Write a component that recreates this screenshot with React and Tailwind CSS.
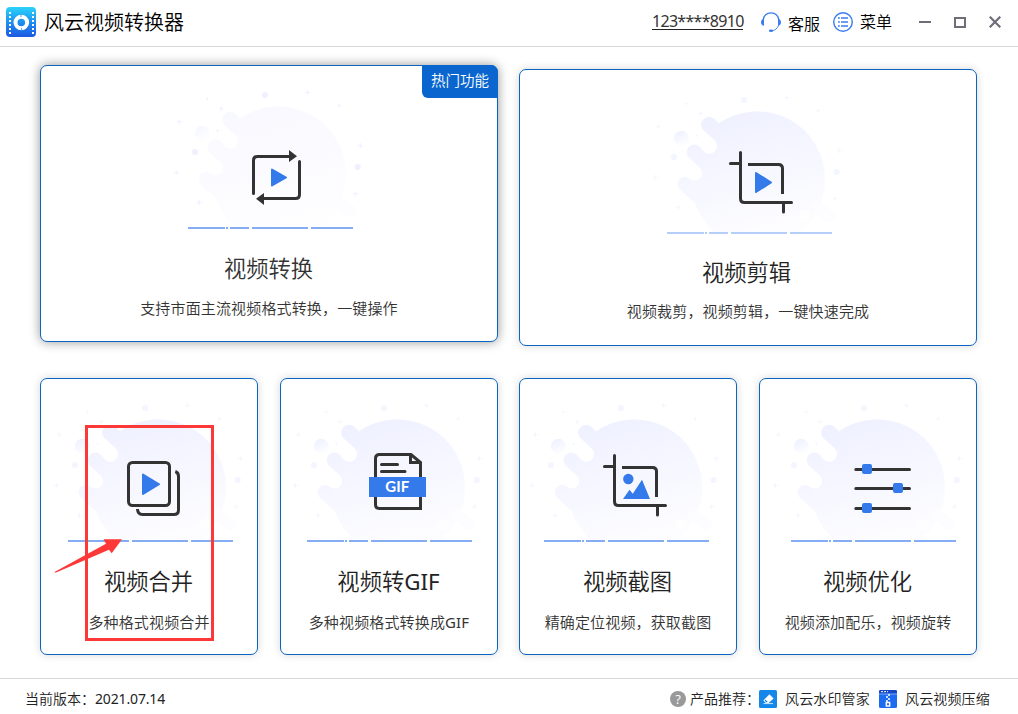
import { useId } from 'react';

const SPARKS = [
  [47.3, 18.7, 1.5],
  [61.3, 28.7, 2.5],
  [19.3, 41.7, 2.5],
  [147.7, 12.5, 2.5],
  [179.3, 25.7, 1.8],
  [200.3, 65.5, 2.5],
  [195.7, 113.7, 2.5],
  [16.3, 92.5, 2.5],
  [39.3, 122.5, 2.5],
  [57.7, 50.7, 1.5],
];

const Play = ({ x, y, w, h }) => (
  <path
    d={`M${x + 1} ${y + 1.5} L${x + w - 1.5} ${y + h / 2} L${x + 1} ${y + h - 1.5} Z`}
    fill="#357aeb"
    stroke="#357aeb"
    strokeWidth="2"
    strokeLinejoin="round"
  />
);

const Stroke = ({ d, cap = 'round' }) => (
  <path d={d} fill="none" stroke="#333333" strokeWidth="3" strokeLinecap={cap} />
);

const ConvertIcon = () => (
  <>
    <Stroke d="M93.5 113.5 V80.5 Q93.5 76.5 97.5 76.5 H130" />
    <Stroke d="M139.5 81.5 V114.5 Q139.5 118.5 135.5 118.5 H103" />
    <path d="M129 70 L137 76.2 L129 82 Z M104 113 L96 118.8 L104 125 Z" fill="#333333" />
    <Play x={111} y={88} w={16.5} h={19} />
  </>
);

const CropFrame = () => (
  <>
    <Stroke d="M101.5 67.5 V113.5 Q101.5 117.5 105.5 117.5 H152.5" />
    <Stroke d="M91.5 78.5 H101" />
    <Stroke d="M109 79.5 H139.5 Q143.5 79.5 143.5 83.5 V109" cap="butt" />
    <Stroke d="M144.5 118 V127" />
  </>
);

const TrimIcon = () => (
  <>
    <CropFrame />
    <Play x={116} y={86.5} w={17.5} h={22} />
  </>
);

const MergeIcon = () => (
  <>
    <rect x="88.5" y="69.5" width="41" height="43" rx="4" fill="none" stroke="#333333" strokeWidth="3" />
    <Stroke d="M135.3 78.5 Q138.5 79.5 138.5 83.5 V117 Q138.5 121.5 134 121.5 H102.5 Q97.7 121.5 97.5 116" cap="butt" />
    <Play x={102} y={80} w={18.5} h={22.5} />
  </>
);

const GifIcon = () => (
  <>
    <Stroke d="M96.5 84 V65.5 Q96.5 61.5 100.5 61.5 H132 L141.5 69.5 V84" cap="butt" />
    <Stroke d="M131.5 61.5 V69.5 H141.5" cap="butt" />
    <Stroke d="M96.5 104 V111.5 Q96.5 115.5 100.5 115.5 H141.5 V104" cap="butt" />
    <Stroke d="M102.5 71.5 H118.5 M102.5 78.5 H126" />
    <rect x="90" y="84" width="57" height="20" fill="#357aeb" />
    <text
      x="118.3"
      y="99"
      textAnchor="middle"
      textLength="24"
      className="fill-white font-['Lato',sans-serif] text-[15px] font-bold"
    >
      GIF
    </text>
  </>
);

const SnapshotIcon = () => (
  <>
    <g transform="translate(-3 -5)">
      <CropFrame />
    </g>
    <circle cx="112.3" cy="86" r="5.2" fill="#357aeb" />
    <path d="M107 106 L113.5 96.8 L116.8 100.7 L126 86.8 L134 106 Z" fill="#357aeb" />
  </>
);

const OptimizeIcon = () => (
  <>
    <Stroke d="M96.8 76.5 H150.5 M96.8 95.5 H150.5 M96.8 115.5 H150.5" />
    <rect x="103" y="71" width="10" height="10" rx="2" fill="#357aeb" />
    <rect x="134" y="90" width="10" height="10" rx="2" fill="#357aeb" />
    <rect x="103" y="110" width="10" height="10" rx="2" fill="#357aeb" />
  </>
);

const Illustration = ({ icon: Icon, className, faint, dot = '#f3f6ff', line = '#84adf5', lineShift = 0 }) => {
  const id = useId();

  return (
    <svg width="220" height="160" viewBox="0 0 220 160" className={`block shrink-0 ${className}`}>
      <defs>
        <linearGradient id={`${id}-blob`} x1="0.25" y1="0" x2="0.6" y2="1">
          <stop offset="0" stopColor={faint ? '#f8f8ff' : '#eef0ff'} />
          <stop offset="1" stopColor={faint ? '#fefeff' : '#fdfdff'} />
        </linearGradient>
        <linearGradient id={`${id}-ball`} x1="0.2" y1="0" x2="0.6" y2="1">
          <stop offset="0" stopColor={faint ? '#f6f7ff' : '#eef0ff'} />
          <stop offset="1" stopColor="#fefeff" />
        </linearGradient>
      </defs>
      {/* splash */}
      <path
        d="M80 38.3 L74.9 33.4 A8 8 0 0 0 63.7 44.6 L75.8 55.6 A7.7 7.7 0 0 1 64.9 66.5 L60.8 61.8 A7.7 7.7 0 0 0 49.9 72.7 L60.7 82.4 A7.5 7.5 0 0 1 50.5 93.6 A7.3 7.3 0 0 0 40.8 104.5 L56 118.3 A67.7 67.7 0 0 0 75.3 147 H161 A67.7 67.7 0 0 0 186 94.7 A67.7 67.7 0 0 0 80 38.3 Z"
        fill={`url(#${id}-blob)`}
      />
      <path d="M178 122 L190 131" stroke="#fdfdff" strokeWidth="12" strokeLinecap="round" />
      <circle cx="165.5" cy="131.5" r="6" fill="#fefeff" />
      <circle cx="42.3" cy="53.3" r="7.5" fill={`url(#${id}-ball)`} />
      <g fill={dot}>
        <circle cx="35" cy="72" r="3.1" />
        <circle cx="105" cy="15" r="3.1" />
        <circle cx="197.7" cy="87" r="3.1" />
      </g>
      {SPARKS.map(([x, y, r]) => (
        <path key={`${x}-${y}`} d={`M${x - r} ${y} h${r * 2} M${x} ${y - r} v${r * 2}`} stroke={dot} strokeWidth="1" />
      ))}
      {/* ground line */}
      <path
        d="M28 148 H65 M66 148 H68 M70 148 H89 M92 148 H148 M151 148 H193"
        transform={`translate(${lineShift} 0)`}
        stroke={line}
        strokeWidth="2"
      />
      <Icon />
    </svg>
  );
};

const Card = ({ title, desc, art, className, titleClass = 'mt-[15px] text-[#222222]', descClass = 'mt-4' }) => (
  <div className={`relative h-[277px] shrink-0 overflow-hidden rounded-[7px] border border-[#0a66c2] bg-white ${className}`}>
    <Illustration {...art} />
    <h2 className={`-ml-px whitespace-nowrap text-center text-[22.3px] leading-7 font-[350] ${titleClass}`}>{title}</h2>
    <p className={`whitespace-nowrap text-center text-[15px] leading-5 font-[350] tracking-[0.15px] text-[#333333] ${descClass}`}>
      {desc}
    </p>
  </div>
);

const Gif = () => <span className="font-normal">GIF</span>;

const tools = [
  {
    id: 'merge',
    title: '视频合并',
    desc: '多种格式视频合并',
    art: { icon: MergeIcon, className: '-ml-px mt-[14px]' },
    gap: 'mr-[22px]',
  },
  {
    id: 'gif',
    title: <>视频转<Gif /></>,
    desc: <>多种视频格式转换成<Gif /></>,
    art: { icon: GifIcon, className: '-ml-[2px] mt-[14px]' },
    gap: 'mr-[21px]',
  },
  {
    id: 'snapshot',
    title: '视频截图',
    desc: '精确定位视频，获取截图',
    art: { icon: SnapshotIcon, className: '-ml-[4px] mt-[14px]' },
    gap: 'mr-[22px]',
  },
  {
    id: 'optimize',
    title: '视频优化',
    desc: '视频添加配乐，视频旋转',
    art: { icon: OptimizeIcon, className: '-ml-px mt-[14px]', lineShift: 4 },
    gap: '',
  },
];

const Logo = () => (
  <svg width="30" height="30" viewBox="0 0 30 30" className="shrink-0">
    <defs>
      <linearGradient id="logo" x1="0" y1="0" x2="0" y2="1">
        <stop offset="0" stopColor="#2bd3fb" />
        <stop offset="0.5" stopColor="#1e90f0" />
        <stop offset="1" stopColor="#1c58e2" />
      </linearGradient>
    </defs>
    <rect width="30" height="30" rx="4" fill="url(#logo)" />
    <path d="M4 5 V28 M27 5 V28" stroke="#ffffff" strokeWidth="2" strokeDasharray="2 2" />
    <circle cx="15.3" cy="15.5" r="5.8" fill="none" stroke="#ffffff" strokeWidth="4" />
    <path d="M15 7.5 V10 M15.6 21 V23.5" stroke="#1e88ee" strokeWidth="0.8" />
  </svg>
);

const Header = () => (
  <header className="flex h-[47px] shrink-0 items-center border-b border-[#d6d6d6] pb-[2px] pl-[6px] font-[350] text-black">
    <Logo />
    <h1 className="ml-2 whitespace-nowrap pt-[2px] text-[20px] leading-7">风云视频转换器</h1>
    <div className="ml-auto flex items-center text-[16px] leading-6">
      <span className="mb-px w-[91px] whitespace-nowrap border-b border-[#222222] pt-px text-[16px] leading-[15px] font-normal tracking-[-0.7px] text-[#333333]">
        123****8910
      </span>
      <svg width="20" height="20" viewBox="0 0 20 20" className="ml-[18px]" fill="none" stroke="#3b7df0">
        <path d="M2.2 8 C2.8 3.6 6 0.9 10 0.9 S17.2 3.6 17.8 8" strokeWidth="1.3" />
        <path d="M17.8 13 C16.5 16.4 14 18.4 11 18.8" strokeWidth="0.9" />
        <path d="M3 7 C1.2 6.6 0 8.5 0 10.3 S1.2 14 3 13.6 Z M17 7 C18.8 6.6 20 8.5 20 10.3 S18.8 14 17 13.6 Z" fill="#3b7df0" stroke="none" />
        <ellipse cx="10" cy="18.8" rx="2.2" ry="1.2" fill="#3b7df0" stroke="none" />
      </svg>
      <span className="ml-[7px] w-8 pt-[3px]">客服</span>
      <svg width="20" height="20" viewBox="0 0 20 20" className="ml-[13px]" fill="none" stroke="#3b7df0">
        <circle cx="10" cy="10" r="9.3" strokeWidth="1.4" />
        <path d="M5 6 H6.8 M5 10 H6.8 M5 14 H6.8 M8 6 H15 M8 10 H15 M8 14 H15" strokeWidth="1.7" />
      </svg>
      <span className="ml-[7px] w-8">菜单</span>
      <svg width="12" height="12" viewBox="0 0 12 12" className="ml-[27px]" stroke="#706d7a">
        <path d="M0 6 H12" strokeWidth="2" />
      </svg>
      <svg width="12" height="12" viewBox="0 0 12 12" className="ml-[23px]" fill="none" stroke="#706d7a">
        <rect x="1" y="2" width="10" height="9" strokeWidth="2" />
      </svg>
      <svg width="12" height="12" viewBox="0 0 12 12" className="mr-[17px] ml-[23px]" stroke="#706d7a">
        <path d="M0.7 0.7 L11.3 11.3 M11.3 0.7 L0.7 11.3" strokeWidth="2.2" />
      </svg>
    </div>
  </header>
);

const Footer = () => (
  <footer className="flex h-9 shrink-0 items-center border-t border-[#d6d6d6] pt-[4px] pl-[25px] text-[14px] leading-5 font-[350] text-[#222222]">
    <span className="whitespace-nowrap">
      当前版本：<span className="font-normal tracking-[-0.15px]">2021.07.14</span>
    </span>
    <div className="mr-[27px] ml-auto flex items-center whitespace-nowrap">
      <span className="flex h-4 w-4 items-center justify-center rounded-full bg-[#999999] font-['Open_Sans',sans-serif] text-[13px] leading-4 font-normal text-white">
        ?
      </span>
      <span className="ml-1 w-[69px]">产品推荐：</span>
      <svg width="18" height="18" viewBox="0 0 18 18">
        <rect width="18" height="18" rx="1.5" fill="#1687ea" />
        <path d="M10.4 4.2 L14.6 8.4 L9.6 13 H6.8 L4.4 10.4 Z" fill="#ffffff" />
        <path d="M6.6 9.8 L8.9 12 L7.2 12.2 L5.6 10.6 Z" fill="#1687ea" />
        <path d="M4.5 13.6 H14" stroke="#ffffff" strokeWidth="0.8" />
      </svg>
      <span className="ml-2 w-[86px] tracking-[0.15px]">风云水印管家</span>
      <svg width="18" height="18" viewBox="0 0 18 18" className="ml-[8px]">
        <rect width="18" height="18" rx="1.5" fill="#1d6bee" />
        <path d="M0 4 V1.5 Q0 0 1.5 0 H16.5 Q18 0 18 1.5 V4 Z" fill="#1747c4" />
        <path d="M2 1.7 H9" stroke="#ffffff" strokeWidth="1" strokeDasharray="2 1" />
        <path d="M0 4 H18" stroke="#8fc4ff" strokeWidth="0.8" />
        <path d="M9 5 H11 M7 7 H9 M9 9 H11 M7 11 H9" stroke="#ffffff" strokeWidth="1.4" />
        <path d="M7.3 12.5 H10.7 V16 H7.3 Z" fill="none" stroke="#ffffff" strokeWidth="1.4" />
      </svg>
      <span className="ml-2 w-[86px] tracking-[0.15px]">风云视频压缩</span>
    </div>
  </footer>
);

// red frame and arrow pointing at the merge tool
const Highlight = () => (
  <>
    <div className="absolute top-[425px] left-[85px] h-[216px] w-[129px] border-3 border-[#fd3838]" />
    <svg width="70" height="36" viewBox="0 0 70 36" className="absolute top-[538px] left-[54px]">
      <path d="M0.5 34 L52 5.8 L49.5 1.2 L68 1.2 L57.7 15.3 L55 11.8 L1.5 34.8 Z" fill="#fd3838" />
    </svg>
  </>
);

const App = () => (
  <div className="relative flex h-[714px] w-[1018px] flex-col overflow-hidden bg-white font-['Noto_Sans','Noto_Sans_CJK_SC',sans-serif]">
    <Header />
    <main className="flex-1 px-10 pt-[18px]">
      <div className="flex items-start gap-[21px]">
        <div className="relative">
          <Card
            title="视频转换"
            desc="支持市面主流视频格式转换，一键操作"
            className="w-[458px] shadow-[0_0_11px_rgba(0,0,0,0.42)]"
            titleClass="mt-[15px] text-[#333333]"
            descClass="mt-[15px]"
            art={{ icon: ConvertIcon, className: 'ml-[119px] mt-[14px]', faint: true, dot: '#f0f1ff' }}
          />
          <span className="absolute top-0 right-0 flex h-[33px] w-[76px] items-center justify-center rounded-tr-[7px] rounded-bl-[6px] bg-[#0a66ce] pb-px text-[14.5px] font-[350] text-white">
            热门功能
          </span>
        </div>
        <Card
          title="视频剪辑"
          desc="视频裁剪，视频剪辑，一键快速完成"
          className="mt-1 w-[458px] shadow-[0_0_8px_rgba(0,0,0,0.16)]"
          titleClass="mt-[14px] -translate-x-px text-[#222222]"
          descClass="mt-[14px]"
          art={{ icon: TrimIcon, className: 'ml-[119px] mt-[15px]', line: '#b4cdf9' }}
        />
      </div>
      <div className="mt-8 flex">
        {tools.map(({ id, gap, ...tool }) => (
          <Card key={id} {...tool} className={`w-[218px] shadow-[0_0_8px_rgba(0,0,0,0.16)] ${gap}`} />
        ))}
      </div>
    </main>
    <Footer />
    <Highlight />
  </div>
);

export default App;
